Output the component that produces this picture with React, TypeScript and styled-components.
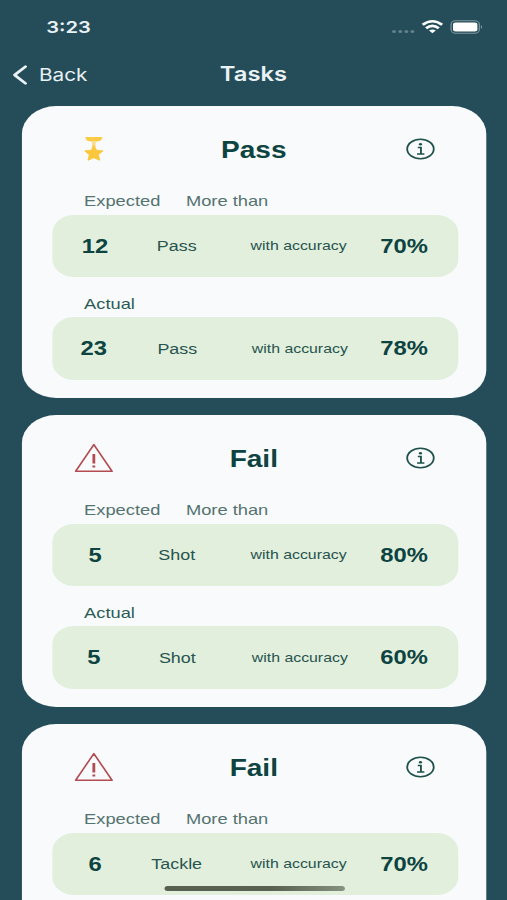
import React from 'react';
import styled, { createGlobalStyle } from 'styled-components';

const GlobalStyle = createGlobalStyle`
  * { box-sizing: border-box; }
  html, body { margin: 0; overflow: hidden; background: #254d59; }
`;

/* The layout is authored 416px wide and widened to fill a 507px viewport. */
const Screen = styled.main`
  width: 416px;
  height: 900px;
  overflow: hidden;
  transform: scaleX(1.21875);
  transform-origin: 0 0;
  background: #254d59;
  font-family: 'Liberation Sans', Arial, sans-serif;
  color: #0d4341;
`;

const StatusBar = styled.div`
  height: 54px;
  padding: 0 19px 0 38px;
  display: flex;
  align-items: center;
  justify-content: space-between;
  color: #e9f2f5;
`;

const Clock = styled.span`
  font: 600 16.5px/20px Inter, sans-serif;
`;

const StatusIcons = styled.svg`
  display: block;
  width: 76px;
  height: 16px;
`;

const NavBar = styled.nav`
  height: 52px;
  padding: 0 10px 12px;
  display: grid;
  grid-template-columns: 1fr auto 1fr;
  align-items: center;
  color: #e9f2f5;
  font-family: Inter, sans-serif;
`;

const BackButton = styled.button`
  padding: 1px 0 0;
  border: 0;
  background: none;
  color: inherit;
  display: flex;
  align-items: center;
  gap: 9px;
  font: 400 17px/22px Inter, sans-serif;
`;

const Chevron = styled.svg`
  width: 13px;
  height: 22px;
`;

const NavTitle = styled.h1`
  margin: 0;
  font-size: 19.5px;
  line-height: 24px;
  font-weight: 600;
`;

const CardList = styled.div`
  padding: 0 17px 0 18px;
  display: flex;
  flex-direction: column;
  gap: 17px;
`;

const Card = styled.section`
  height: 292px;
  flex: none;
  padding: 22px 23px 0 25px;
  border-radius: 28px;
  background: #f8fafc;
`;

const CardHeader = styled.header`
  height: 42px;
  display: grid;
  grid-template-columns: 68px 1fr 70.5px;
  align-items: center;
  justify-items: center;

  & > :last-child {
    justify-self: end;
    margin-right: 19.5px;
  }
`;

const CardTitle = styled.h2`
  margin: 0;
  padding-top: 2px;
  font-size: 23px;
  line-height: 28px;
  font-weight: 700;
`;

const Icon = styled.svg<{ $w: number; $h: number }>`
  display: block;
  width: ${(p) => p.$w}px;
  height: ${(p) => p.$h}px;
`;

const Labels = styled.div<{ $actual?: boolean }>`
  height: ${(p) => (p.$actual ? '40px' : '44.5px')};
  padding: 0 0 ${(p) => (p.$actual ? '4px' : '5px')} 26px;
  display: flex;
  align-items: flex-end;
  gap: 21px;
  font-size: 15px;
  line-height: 19px;
  color: ${(p) => (p.$actual ? '#2c5a55' : '#557370')};
`;

const Panel = styled.div<{ $actual?: boolean }>`
  height: 62.5px;
  border-radius: 18px;
  background: #e1efdc;
  display: grid;
  grid-template-columns: ${(p) => (p.$actual ? '68px 69px 132px 39px' : '70px 64px 136px 37px')};
  align-items: center;
  justify-items: center;
  white-space: nowrap;
`;

const Figure = styled.strong`
  font-size: 19.5px;
  line-height: 24px;
  font-weight: 700;
`;

const Action = styled.span`
  padding-top: 1px;
  font-size: 14.7px;
  line-height: 20px;
  color: #28534f;
`;

const Note = styled.span`
  padding-top: 1px;
  font-size: 13px;
  line-height: 18px;
  color: #28534f;
`;

const HomeIndicator = styled.div`
  position: absolute;
  left: 134.5px;
  top: 886px;
  width: 148px;
  height: 5px;
  border-radius: 2.5px;
  background: linear-gradient(90deg, #58604f, #596251 60%, #879180);
`;

const Medal = () => (
  <Icon $w={16} $h={26} viewBox="0 0 16 26">
    <path d="M1.2 1H14.8V2.8Q13.6 5.4 10.5 5.6H5.5Q2.4 5.4 1.2 2.8Z" fill="#fccb45" />
    <path d="M6.5 5.5H9.5V11H6.5Z" fill="#fbdc8a" />
    <path
      d="M8 9.3L10.2 14.2L15.5 14.9L11.7 18.7L12.8 24.2L8 21.8L3.2 24.2L4.3 18.7L0.5 14.9L5.8 14.2Z"
      fill="#fbc73c" stroke="#fbc73c" strokeWidth="0.8" strokeLinejoin="round"
    />
  </Icon>
);

const Warning = () => (
  <Icon $w={32} $h={30} viewBox="0 0 32 30">
    <path d="M16 1.6L31 28.3H1Z" fill="none" stroke="#b44b50" strokeWidth="1.4" strokeLinejoin="round" />
    <path d="M16 11V20.6" stroke="#b44b50" strokeWidth="2.3" />
    <path d="M16 22.4V24.4" stroke="#b44b50" strokeWidth="2.3" />
  </Icon>
);

const Info = () => (
  <Icon $w={24} $h={22} viewBox="0 0 24 22">
    <ellipse cx="12" cy="11" rx="10.9" ry="9.7" fill="none" stroke="#1f514b" strokeWidth="1.5" />
    <circle cx="12" cy="6.2" r="1.3" fill="#1f514b" />
    <path d="M9.8 9.4H12.4V15.8M9.2 16H15.2" fill="none" stroke="#1f514b" strokeWidth="1.5" />
  </Icon>
);

interface Task {
  passed: boolean;
  action: string;
  expected: [string, string];
  actual?: [string, string];
}

const tasks: Task[] = [
  { passed: true, action: 'Pass', expected: ['12', '70%'], actual: ['23', '78%'] },
  { passed: false, action: 'Shot', expected: ['5', '80%'], actual: ['5', '60%'] },
  { passed: false, action: 'Tackle', expected: ['6', '70%'] },
];

const Result = ({ values, action, actual }: { values: [string, string]; action: string; actual?: boolean }) => (
  <Panel $actual={actual}>
    <Figure>{values[0]}</Figure>
    <Action>{action}</Action>
    <Note>with accuracy</Note>
    <Figure>{values[1]}</Figure>
  </Panel>
);

export default function App() {
  return (
    <>
      <GlobalStyle />
      <Screen>
        <StatusBar>
          <Clock>3:23</Clock>
          <StatusIcons viewBox="0 0 76 16" fill="none">
            <g fill="#62818a">
              <circle cx="2.3" cy="12.5" r="1.6" />
              <circle cx="7.4" cy="12.5" r="1.6" />
              <circle cx="12.4" cy="12.5" r="1.6" />
              <circle cx="17.4" cy="12.5" r="1.6" />
            </g>
            <g stroke="#f8fcfc" strokeWidth="2.5">
              <path d="M25.8 5.8Q33.8 -1.4 41.8 5.8" />
              <path d="M28.6 9.2Q33.8 4.5 39 9.2" />
            </g>
            <path d="M31 11.6Q33.8 9.2 36.6 11.6L33.8 14.3Z" fill="#f8fcfc" />
            <rect x="49.1" y="1.8" width="23.2" height="12.4" rx="3.7" stroke="#7d979e" />
            <rect x="50.7" y="3.5" width="20" height="9" rx="2.2" fill="white" />
            <path d="M73.6 6Q75.4 8 73.6 10Z" fill="#8da3a9" />
          </StatusIcons>
        </StatusBar>
        <NavBar>
          <BackButton>
            <Chevron viewBox="0 0 13 22" fill="none">
              <path d="M10.9 2.6L2 11L10.9 19.4" stroke="currentColor" strokeWidth="2.5" strokeLinecap="round" strokeLinejoin="round" />
            </Chevron>
            Back
          </BackButton>
          <NavTitle>Tasks</NavTitle>
        </NavBar>
        <CardList>
          {tasks.map((task) => (
            <Card key={task.action}>
              <CardHeader>
                {task.passed ? <Medal /> : <Warning />}
                <CardTitle>{task.passed ? 'Pass' : 'Fail'}</CardTitle>
                <Info />
              </CardHeader>
              <Labels>
                <span>Expected</span>
                <span>More than</span>
              </Labels>
              <Result values={task.expected} action={task.action} />
              {task.actual && (
                <>
                  <Labels $actual>
                    <span>Actual</span>
                  </Labels>
                  <Result values={task.actual} action={task.action} actual />
                </>
              )}
            </Card>
          ))}
        </CardList>
        <HomeIndicator />
      </Screen>
    </>
  );
}
